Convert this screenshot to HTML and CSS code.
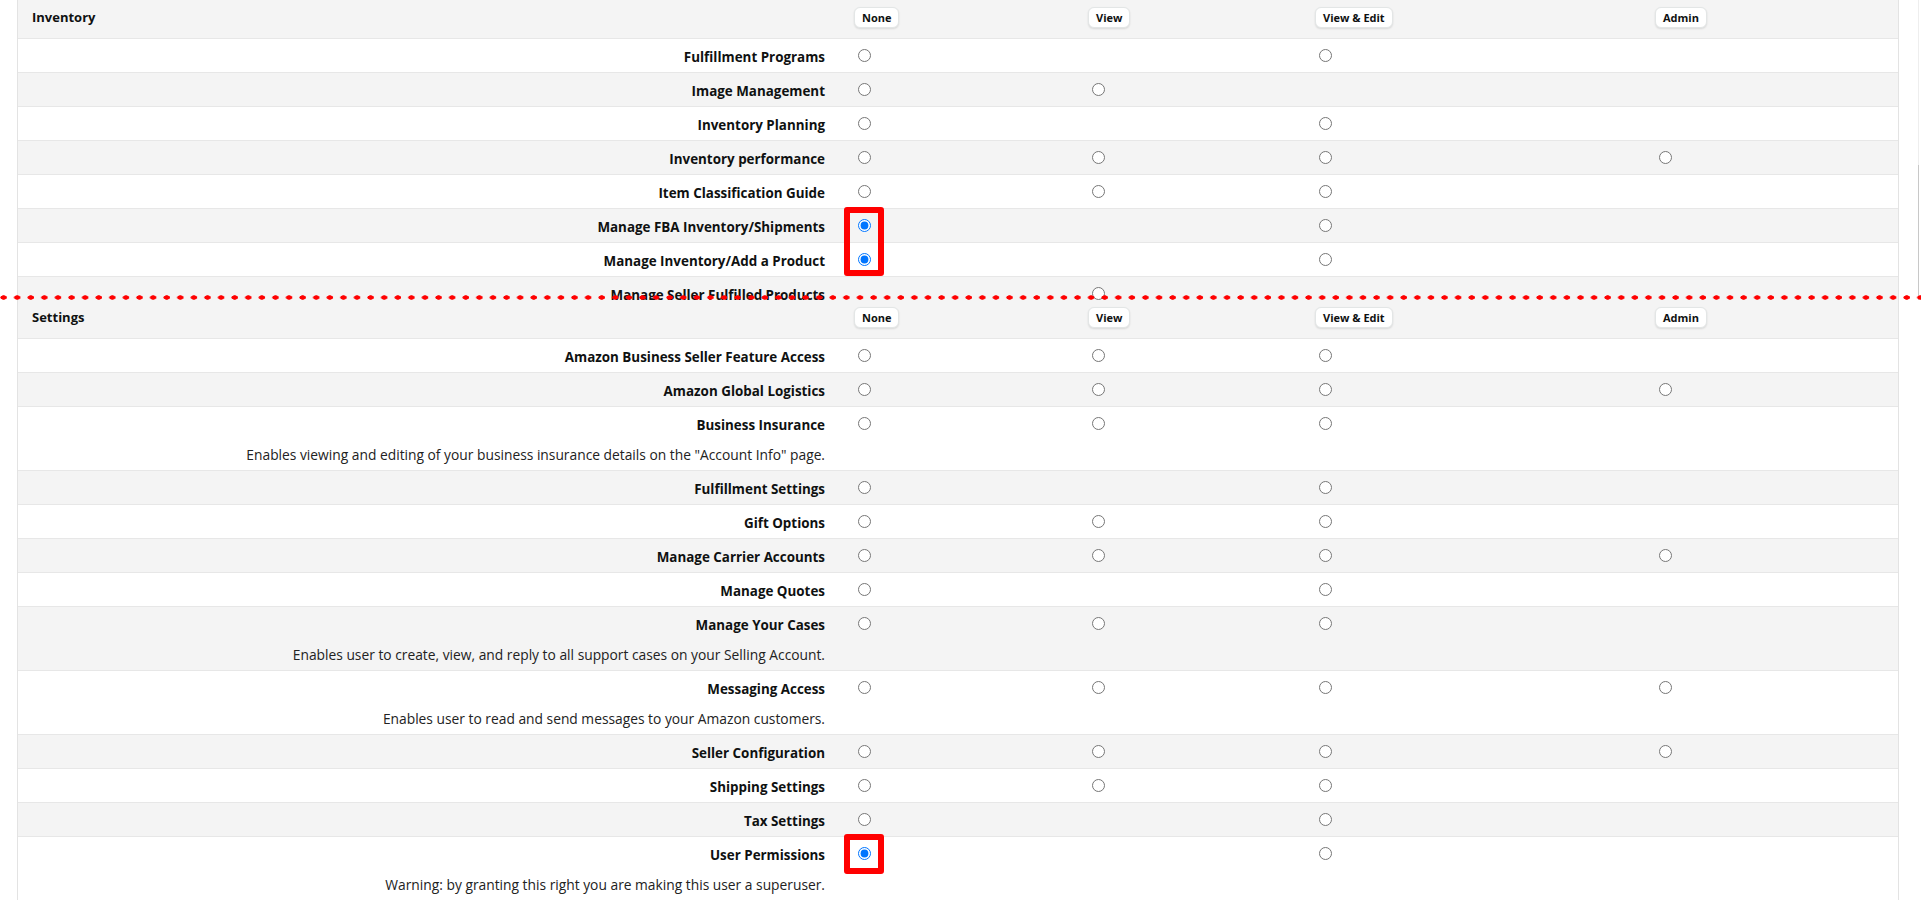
FILE: index.html
```html
<!DOCTYPE html>
<html lang="en">

<head>
    <meta charset="UTF-8" />
    <meta name="viewport" content="width=device-width, initial-scale=1.0" />
    <title>User Permissions</title>
    <link rel="stylesheet" href="styles.css">
</head>

<body>
    <!-- first capture, cut off at the seam -->
    <div class="shot-top">
        <div class="perm-table">
            <div class="perm-head">
                <div class="group-title">Inventory</div>
                <div class="col"><button class="level">None</button></div>
                <div class="col"><button class="level">View</button></div>
                <div class="col"><button class="level">View &amp; Edit</button></div>
                <div class="col"><button class="level">Admin</button></div>
            </div>
            <div class="perm-row">
                <div class="perm-name"><div class="name">Fulfillment Programs</div></div>
                <div class="col"><input type="radio" name="inv1"></div>
                <div class="col"></div>
                <div class="col"><input type="radio" name="inv1"></div>
                <div class="col"></div>
            </div>
            <div class="perm-row">
                <div class="perm-name"><div class="name">Image Management</div></div>
                <div class="col"><input type="radio" name="inv2"></div>
                <div class="col"><input type="radio" name="inv2"></div>
                <div class="col"></div>
                <div class="col"></div>
            </div>
            <div class="perm-row">
                <div class="perm-name"><div class="name">Inventory Planning</div></div>
                <div class="col"><input type="radio" name="inv3"></div>
                <div class="col"></div>
                <div class="col"><input type="radio" name="inv3"></div>
                <div class="col"></div>
            </div>
            <div class="perm-row">
                <div class="perm-name"><div class="name">Inventory performance</div></div>
                <div class="col"><input type="radio" name="inv4"></div>
                <div class="col"><input type="radio" name="inv4"></div>
                <div class="col"><input type="radio" name="inv4"></div>
                <div class="col"><input type="radio" name="inv4"></div>
            </div>
            <div class="perm-row">
                <div class="perm-name"><div class="name">Item Classification Guide</div></div>
                <div class="col"><input type="radio" name="inv5"></div>
                <div class="col"><input type="radio" name="inv5"></div>
                <div class="col"><input type="radio" name="inv5"></div>
                <div class="col"></div>
            </div>
            <div class="perm-row">
                <div class="perm-name"><div class="name">Manage FBA Inventory/Shipments</div></div>
                <div class="col marked">
                    <input type="radio" name="inv6" checked>
                    <span class="mark tall"></span>
                </div>
                <div class="col"></div>
                <div class="col"><input type="radio" name="inv6"></div>
                <div class="col"></div>
            </div>
            <div class="perm-row">
                <div class="perm-name"><div class="name">Manage Inventory/Add a Product</div></div>
                <div class="col"><input type="radio" name="inv7" checked></div>
                <div class="col"></div>
                <div class="col"><input type="radio" name="inv7"></div>
                <div class="col"></div>
            </div>
            <div class="perm-row">
                <div class="perm-name"><div class="name">Manage Seller Fulfilled Products</div></div>
                <div class="col"></div>
                <div class="col"><input type="radio" name="inv8"></div>
                <div class="col"></div>
                <div class="col"></div>
            </div>
        </div>
        <div class="scroll-edge"></div>
        <div class="cut-line"></div>
    </div>

    <!-- second capture -->
    <div class="perm-table">
        <div class="perm-head">
            <div class="group-title">Settings</div>
            <div class="col"><button class="level">None</button></div>
            <div class="col"><button class="level">View</button></div>
            <div class="col"><button class="level">View &amp; Edit</button></div>
            <div class="col"><button class="level">Admin</button></div>
        </div>
        <div class="perm-row">
            <div class="perm-name"><div class="name">Amazon Business Seller Feature Access</div></div>
            <div class="col"><input type="radio" name="set1"></div>
            <div class="col"><input type="radio" name="set1"></div>
            <div class="col"><input type="radio" name="set1"></div>
            <div class="col"></div>
        </div>
        <div class="perm-row">
            <div class="perm-name"><div class="name">Amazon Global Logistics</div></div>
            <div class="col"><input type="radio" name="set2"></div>
            <div class="col"><input type="radio" name="set2"></div>
            <div class="col"><input type="radio" name="set2"></div>
            <div class="col"><input type="radio" name="set2"></div>
        </div>
        <div class="perm-row">
            <div class="perm-name">
                <div class="name">Business Insurance</div>
                <div class="desc">Enables viewing and editing of your business insurance details on the "Account Info" page.</div>
            </div>
            <div class="col"><input type="radio" name="set3"></div>
            <div class="col"><input type="radio" name="set3"></div>
            <div class="col"><input type="radio" name="set3"></div>
            <div class="col"></div>
        </div>
        <div class="perm-row">
            <div class="perm-name"><div class="name">Fulfillment Settings</div></div>
            <div class="col"><input type="radio" name="set4"></div>
            <div class="col"></div>
            <div class="col"><input type="radio" name="set4"></div>
            <div class="col"></div>
        </div>
        <div class="perm-row">
            <div class="perm-name"><div class="name">Gift Options</div></div>
            <div class="col"><input type="radio" name="set5"></div>
            <div class="col"><input type="radio" name="set5"></div>
            <div class="col"><input type="radio" name="set5"></div>
            <div class="col"></div>
        </div>
        <div class="perm-row">
            <div class="perm-name"><div class="name">Manage Carrier Accounts</div></div>
            <div class="col"><input type="radio" name="set6"></div>
            <div class="col"><input type="radio" name="set6"></div>
            <div class="col"><input type="radio" name="set6"></div>
            <div class="col"><input type="radio" name="set6"></div>
        </div>
        <div class="perm-row">
            <div class="perm-name"><div class="name">Manage Quotes</div></div>
            <div class="col"><input type="radio" name="set7"></div>
            <div class="col"></div>
            <div class="col"><input type="radio" name="set7"></div>
            <div class="col"></div>
        </div>
        <div class="perm-row">
            <div class="perm-name">
                <div class="name">Manage Your Cases</div>
                <div class="desc">Enables user to create, view, and reply to all support cases on your Selling Account.</div>
            </div>
            <div class="col"><input type="radio" name="set8"></div>
            <div class="col"><input type="radio" name="set8"></div>
            <div class="col"><input type="radio" name="set8"></div>
            <div class="col"></div>
        </div>
        <div class="perm-row">
            <div class="perm-name">
                <div class="name">Messaging Access</div>
                <div class="desc">Enables user to read and send messages to your Amazon customers.</div>
            </div>
            <div class="col"><input type="radio" name="set9"></div>
            <div class="col"><input type="radio" name="set9"></div>
            <div class="col"><input type="radio" name="set9"></div>
            <div class="col"><input type="radio" name="set9"></div>
        </div>
        <div class="perm-row">
            <div class="perm-name"><div class="name">Seller Configuration</div></div>
            <div class="col"><input type="radio" name="set10"></div>
            <div class="col"><input type="radio" name="set10"></div>
            <div class="col"><input type="radio" name="set10"></div>
            <div class="col"><input type="radio" name="set10"></div>
        </div>
        <div class="perm-row">
            <div class="perm-name"><div class="name">Shipping Settings</div></div>
            <div class="col"><input type="radio" name="set11"></div>
            <div class="col"><input type="radio" name="set11"></div>
            <div class="col"><input type="radio" name="set11"></div>
            <div class="col"></div>
        </div>
        <div class="perm-row">
            <div class="perm-name"><div class="name">Tax Settings</div></div>
            <div class="col"><input type="radio" name="set12"></div>
            <div class="col"></div>
            <div class="col"><input type="radio" name="set12"></div>
            <div class="col"></div>
        </div>
        <div class="perm-row">
            <div class="perm-name">
                <div class="name">User Permissions</div>
                <div class="desc">Warning: by granting this right you are making this user a superuser.</div>
            </div>
            <div class="col marked">
                <input type="radio" name="set13" checked>
                <span class="mark"></span>
            </div>
            <div class="col"></div>
            <div class="col"><input type="radio" name="set13"></div>
            <div class="col"></div>
        </div>
    </div>
</body>

</html>
```

FILE: styles.css
```css
body {
    margin: 0;
    font-family: "Open Sans", "Liberation Sans", Arial, sans-serif;
    color: #0f1111;
    background-color: #fff;
    overflow: hidden;
}

.shot-top {
    position: relative;
    height: 300px;
    overflow: hidden;
}

.scroll-edge {
    position: absolute;
    right: 2px;
    top: 0;
    bottom: 0;
    width: 1px;
    background: linear-gradient(#eeeeee 0 165px, #c8c8c8 165px);
}

.cut-line {
    position: absolute;
    left: 0;
    right: 0;
    bottom: 0;
    height: 5px;
    background-image: radial-gradient(ellipse 3.6px 2.4px at 3.6px 2.5px, #f00 80%, transparent 100%);
    background-size: 13.6px 5px;
    background-repeat: repeat-x;
    z-index: 2;
}

.perm-table {
    margin-left: 17px;
    width: 1882px;
    box-sizing: border-box;
    border-left: 1px solid #e3e3e3;
    border-right: 1px solid #e3e3e3;
}

.perm-head,
.perm-row {
    display: grid;
    grid-template-columns: 836px 234px 227px 340px 1fr;
    border-bottom: 1px solid #e7e7e7;
}

.perm-head {
    height: 39px;
    box-sizing: border-box;
    background-color: #f4f4f4;
}

.perm-row:nth-child(odd) {
    background-color: #f4f4f4;
}

.group-title {
    padding: 9px 14px 0;
    font-size: 13px;
    font-weight: 700;
    line-height: 16px;
}

.perm-name {
    padding: 10px 29px 7px 0;
    text-align: right;
    font-size: 13.4px;
    line-height: 16px;
}

.name {
    font-weight: 700;
}

.desc {
    margin-top: 14px;
    font-size: 13.8px;
    font-weight: 400;
    color: #222;
}

.col {
    display: flex;
    align-items: flex-start;
}

.col input[type="radio"] {
    width: 13px;
    height: 13px;
    margin: 10px 0 0 4px;
}

.level {
    margin-top: 7px;
    height: 21px;
    padding: 0 7px;
    font-family: "Open Sans", "Liberation Sans", Arial, sans-serif;
    font-size: 11px;
    font-weight: 700;
    color: #0f1111;
    background-color: #fff;
    border: 1px solid #e3e6e6;
    border-radius: 6px;
    box-shadow: 0 1px 2px rgba(15, 17, 17, 0.12);
}

.marked {
    position: relative;
}

.mark {
    position: absolute;
    left: -10px;
    top: -3px;
    width: 40px;
    height: 40px;
    box-sizing: border-box;
    border: 6px solid #f00;
    border-radius: 3px;
    z-index: 1;
}

.mark.tall {
    top: -2px;
    height: 69px;
}
```
